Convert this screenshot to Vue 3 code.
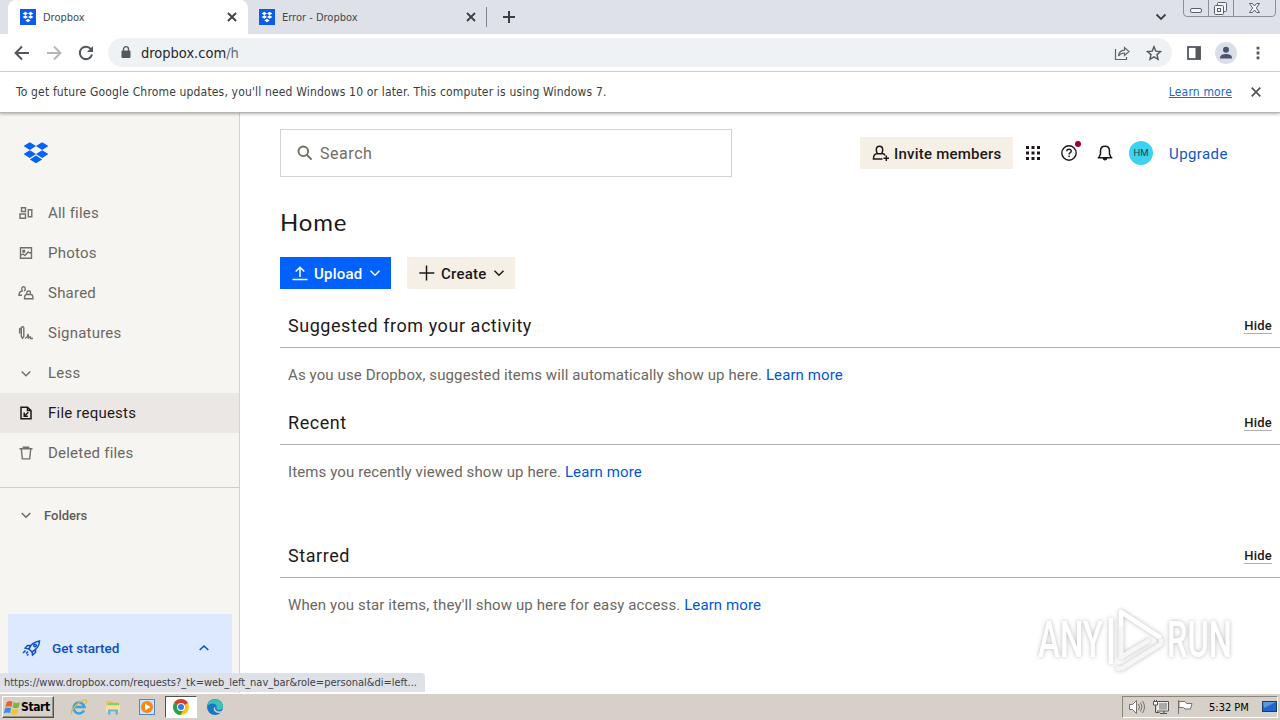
<script setup>
import { ref } from 'vue';

const tabs = [
  { title: 'Dropbox', active: true },
  { title: 'Error - Dropbox', active: false },
];

const navItems = [
  { id: 'all', label: 'All files' },
  { id: 'photos', label: 'Photos' },
  { id: 'shared', label: 'Shared' },
  { id: 'signatures', label: 'Signatures' },
  { id: 'less', label: 'Less' },
  { id: 'requests', label: 'File requests' },
  { id: 'deleted', label: 'Deleted files' },
];
const current = ref('requests');

const sections = [
  {
    id: 'suggested',
    title: 'Suggested from your activity',
    text: 'As you use Dropbox, suggested items will automatically show up here.',
  },
  {
    id: 'recent',
    title: 'Recent',
    text: 'Items you recently viewed show up here.',
  },
  {
    id: 'starred',
    title: 'Starred',
    text: "When you star items, they'll show up here for easy access.",
  },
];
</script>

<template>
  <div class="screen">
    <!-- Tabs -->
    <div class="tab-strip">
      <div v-for="tab in tabs" :key="tab.title" class="tab" :class="{ active: tab.active }">
        <svg class="favicon" width="16" height="16" viewBox="0 0 16 16">
          <rect width="16" height="16" fill="#0d5be8" />
          <path
            fill="#fff"
            d="M5.400 2.800 8 4.500 5.400 6.200 2.600 4.500zM10.600 2.800l2.800 1.700-2.800 1.700L8 4.500zM5.400 6.300 8 8 5.400 9.700 2.600 8zM10.600 6.300 13.400 8l-2.800 1.700L8 8zM8 9.800l2.700 1.700L8 13.200l-2.700-1.700z"
          />
        </svg>
        <span class="tab-title">{{ tab.title }}</span>
        <svg class="tab-close" width="10" height="10" viewBox="0 0 10 10">
          <path d="M1 1l8 8M9 1l-8 8" stroke="#3c4043" stroke-width="1.800" />
        </svg>
      </div>
      <i class="tab-divider"></i>
      <svg class="new-tab" width="14" height="14" viewBox="0 0 14 14">
        <path d="M7 1v12M1 7h12" stroke="#3c4043" stroke-width="2" />
      </svg>
      <svg class="tab-search" width="12" height="8" viewBox="0 0 12 8">
        <path d="M1.500 1.500 6 6l4.500-4.500" fill="none" stroke="#3c4043" stroke-width="1.800" />
      </svg>
      <svg class="window-buttons" width="94" height="18" viewBox="0 0 94 18">
        <path d="M.5 0v13q0 3.500 3.500 3.500h85q3.500 0 3.500-3.500V0M25.500 0v16M50.500 0v16" fill="none" stroke="#8b909b" />
        <g fill="#f4f5f8" stroke="#5a606b">
          <rect x="7.500" y="8.500" width="11" height="4" rx="1.500" />
          <rect x="34.500" y="2.500" width="9" height="9" rx="1" />
          <rect x="31.500" y="5.500" width="9" height="9" rx="1" />
          <rect x="34.500" y="8.500" width="3" height="3" />
          <path d="M66.500 3.500h3l2 2.500 2-2.500h3l-3.200 4.500 3.200 4.500h-3l-2-2.500-2 2.500h-3l3.200-4.500z" />
        </g>
      </svg>
    </div>

    <!-- Toolbar -->
    <div class="toolbar">
      <div class="nav-buttons">
        <svg width="16" height="16" viewBox="0 0 16 16">
          <path d="M15 8H2M8 1.500 1.600 8 8 14.500" fill="none" stroke="#54585d" stroke-width="2" />
        </svg>
        <svg width="16" height="16" viewBox="0 0 16 16">
          <path d="M1 8h13M8 1.500 14.400 8 8 14.500" fill="none" stroke="#b4b6b9" stroke-width="2" />
        </svg>
        <svg width="16" height="16" viewBox="0 0 16 16">
          <path d="M13.200 4.500A6.200 6.200 0 1 0 14 9.500" fill="none" stroke="#54585d" stroke-width="2" />
          <path d="M15 1v6H9z" fill="#54585d" />
        </svg>
      </div>
      <div class="omnibox">
        <svg width="10" height="13" viewBox="0 0 10 13">
          <rect x="0.500" y="4.500" width="9" height="7.500" rx="1" fill="#54585d" />
          <path d="M2.500 5V3.200a2.500 2.500 0 0 1 5 0V5" fill="none" stroke="#54585d" stroke-width="1.300" />
        </svg>
        <span class="url">dropbox.com<span class="path">/h</span></span>
        <svg class="share" width="16" height="16" viewBox="0 0 16 16">
          <path d="M1.500 4v10.500h11V12" fill="none" stroke="#5f6368" stroke-width="1.200" />
          <path d="M4.500 11q.5-5.500 6-5.800V2.500L15 6.500l-4.500 4V8Q6.500 8 4.500 11z" fill="none" stroke="#5f6368" stroke-width="1.200" />
        </svg>
        <svg class="star" width="16" height="16" viewBox="0 0 16 16">
          <path d="M8 1.700l1.800 4.400 4.800.4-3.600 3.100 1.100 4.700L8 11.800l-4.100 2.500L5 9.600 1.400 6.500l4.800-.4z" fill="none" stroke="#54585d" stroke-width="1.400" />
        </svg>
      </div>
      <svg class="side-panel" width="14" height="14" viewBox="0 0 14 14">
        <rect x="1" y="1" width="12" height="12" fill="none" stroke="#54585d" stroke-width="1.800" />
        <rect x="8.500" y="1" width="5" height="12" fill="#54585d" />
      </svg>
      <svg class="profile" width="22" height="22" viewBox="0 0 22 22">
        <circle cx="11" cy="11" r="11" fill="#dadee6" />
        <circle cx="11" cy="7.800" r="3" fill="#4a5370" />
        <path d="M5 16.500v-1.300q1-3.200 6-3.200t6 3.200v1.300z" fill="#4a5370" />
      </svg>
      <svg class="menu" width="4" height="14" viewBox="0 0 4 14">
        <path d="M.6.700h2.800v2.800H.6zM.6 5.600h2.800v2.800H.6zM.6 10.500h2.800v2.800H.6z" fill="#54585d" />
      </svg>
    </div>

    <!-- Update notice -->
    <div class="infobar">
      <span class="info-text">To get future Google Chrome updates, you'll need Windows 10 or later. This computer is using Windows 7.</span>
      <a class="info-link">Learn more</a>
      <svg width="10" height="10" viewBox="0 0 10 10">
        <path d="M.7.700l8.600 8.600M9.300.700.700 9.300" stroke="#54585d" stroke-width="1.800" />
      </svg>
    </div>

    <div class="page">
      <aside class="sidebar">
        <svg class="logo" width="26" height="22" viewBox="0 0 26 22">
          <path
            fill="#0061fe"
            d="M6.800.200 13 4.100 6.800 8 .600 4.100zM19.200.200l6.200 3.900L19.200 8 13 4.100zM6.800 8.200l6.200 3.900L6.800 16 .6 12.100zM19.200 8.200l6.200 3.900-6.200 3.900-6.200-3.900zM13 13.500l6.100 3.900-6.100 3.900-6.100-3.900z"
          />
        </svg>
        <nav>
          <a v-for="item in navItems" :key="item.id" class="nav-item" :class="{ selected: item.id === current }">
            <svg class="nav-icon" width="16" height="16" viewBox="0 0 16 16">
              <path v-if="item.id === 'all'" d="M3.500 2.700h4v3.800h-4zM2 9h5.500v4.300H2zM10.300 4.700h3.500v7h-3.500z" />
              <path v-else-if="item.id === 'photos'" d="M2.500 2.700h11v10.600h-11zM2.500 10.500 5 9l2 1.500L10.200 7l1.300 1 2-.5M5 5.500h1.500V7H5z" />
              <path v-else-if="item.id === 'shared'" d="M3.800 5V3.500q0-1.800 1.700-1.800t1.700 1.800V5l-.9 1.200M3.800 5l.5 1Q1 6.500 1 10.200h3M8.800 9V7.500Q8.800 6 10.600 6t1.800 1.500V9M6.500 13.800q0-4.300 2-4.300H13q2 0 2 4.300z" />
              <path v-else-if="item.id === 'signatures'" d="M3.300 2v9.500L4.500 13.300l1.300-1.800V3q0-1.300-1.200-1.300T3.300 3M1.600 8.500V4l1.700-1M7 13.500q2.500-1 3-4 1 0 0 4 1.500-2 2.500-1.500v1.500H15" />
              <path v-else-if="item.id === 'less'" d="M3.700 6.500 8 10.700l4.300-4.200" stroke-width="1.500" />
              <path v-else-if="item.id === 'requests'" d="M3 2.200h6.500L13 5.500v8.300H3zM9.500 2.200v3.300H13M10.300 7.300 6.700 10.800M6.200 7.600v3.700h3.700" stroke-width="1.500" />
              <path v-else d="M1.500 3.800h13M5.300 4V2.300h5.400V4M3.300 4l1 9.900h7.400l1-9.900" />
            </svg>
            <span>{{ item.label }}</span>
          </a>
        </nav>
        <div class="folders">
          <svg width="12" height="8" viewBox="0 0 12 8">
            <path d="M1.700 2 6 6.200 10.300 2" fill="none" stroke="#6b6762" stroke-width="1.500" />
          </svg>
          <span>Folders</span>
        </div>
        <div class="get-started">
          <svg width="20" height="18" viewBox="0 0 20 18" fill="none" stroke="#0e4fc4" stroke-width="1.500">
            <path d="M7 10Q9 3.500 17.500 2 17.500 8.500 10 13zM8.500 6.500H5.500L3.200 9 7 10M13.500 10.500v3L10.500 16 10 13" />
            <circle cx="13" cy="6.500" r="1.300" />
            <path d="M6 12.500 4 14.500M3.500 11.500 1 14M6.500 15 5 16.500" />
          </svg>
          <span>Get started</span>
          <svg width="12" height="8" viewBox="0 0 12 8">
            <path d="M1.700 6 6 2l4.300 4" fill="none" stroke="#0e4fc4" stroke-width="1.600" />
          </svg>
        </div>
      </aside>

      <main class="main">
        <header class="topbar">
          <div class="search">
            <svg width="16" height="16" viewBox="0 0 16 16">
              <circle cx="6.300" cy="6.300" r="4.800" fill="none" stroke="#736c64" stroke-width="1.900" />
              <path d="M9.800 9.800l4.800 4.800" stroke="#736c64" stroke-width="2" />
            </svg>
            <span>Search</span>
          </div>
          <button class="btn invite">
            <svg width="18" height="18" viewBox="0 0 18 18" fill="none" stroke="#1e1919" stroke-width="1.500">
              <path d="M10.500 15H1.500q0-5.300 3.300-5.300h6q1.700 0 2.300 1.800" />
              <path d="M5.300 9.200Q4.300 8 4.300 5.800q0-3.500 3.200-3.500t3.200 3.500q0 2.200-1 3.400M14.300 11.500v5.500M11.500 14.200h5.500" />
            </svg>
            <span>Invite members</span>
          </button>
          <svg class="apps" width="14" height="14" viewBox="0 0 14 14">
            <path d="M0 0h3v3H0zM5.500 0h3v3h-3zM11 0h3v3h-3zM0 5.500h3v3H0zM5.500 5.500h3v3h-3zM11 5.500h3v3h-3zM0 11h3v3H0zM5.500 11h3v3h-3zM11 11h3v3h-3z" fill="#1e1919" />
          </svg>
          <div class="help">
            <svg width="16" height="16" viewBox="0 0 16 16" fill="none" stroke="#1e1919" stroke-width="1.400">
              <circle cx="8" cy="8" r="7.200" />
              <path d="M5.800 6.300q0-2 2.200-2t2.200 1.900q0 1-1.200 1.700-.9.500-.9 1.600M8.100 10.500V12" />
            </svg>
            <i class="dot"></i>
          </div>
          <svg class="bell" width="16" height="16" viewBox="0 0 16 16">
            <path d="M.7 12.800h14.600M2 12.300l1.500-3.300V6q0-4.700 4.500-4.700T12.500 6v3l1.500 3.300" fill="none" stroke="#1e1919" stroke-width="1.500" />
            <path d="M5.500 13h5q-.5 2.600-2.500 2.600T5.500 13z" fill="#1e1919" />
          </svg>
          <span class="avatar">HM</span>
          <a class="upgrade">Upgrade</a>
        </header>

        <h1>Home</h1>
        <div class="actions">
          <button class="btn upload">
            <svg width="16" height="16" viewBox="0 0 16 16" fill="none" stroke="#fff" stroke-width="1.500">
              <path d="M.5 14.500h15M8 12V2.500M3.700 6.500 8 2.200l4.300 4.300" />
            </svg>
            <span>Upload</span>
            <svg width="12" height="8" viewBox="0 0 12 8">
              <path d="M1.500 1.800 6 6.200l4.500-4.400" fill="none" stroke="#fff" stroke-width="1.500" />
            </svg>
          </button>
          <button class="btn create">
            <svg width="16" height="16" viewBox="0 0 16 16">
              <path d="M7.500 .5v15M.3 8h15" stroke="#1e1919" stroke-width="1.500" />
            </svg>
            <span>Create</span>
            <svg width="12" height="8" viewBox="0 0 12 8">
              <path d="M1.500 1.800 6 6.200l4.500-4.400" fill="none" stroke="#1e1919" stroke-width="1.500" />
            </svg>
          </button>
        </div>

        <section v-for="section in sections" :key="section.id" :class="['section', section.id]">
          <div class="section-head">
            <h2>{{ section.title }}</h2>
            <a class="hide">Hide</a>
          </div>
          <p>{{ section.text }} <a>Learn more</a></p>
        </section>
      </main>

      <div class="status">https://www.dropbox.com/requests?_tk=web_left_nav_bar&amp;role=personal&amp;di=left...</div>

      <!-- Watermark -->
      <svg class="watermark" width="220" height="78" viewBox="0 0 220 78">
        <g font-family="Roboto, sans-serif" font-size="50" font-weight="500" fill="#fff">
          <text x="8" y="55" textLength="65" lengthAdjust="spacingAndGlyphs">ANY</text>
          <text x="137" y="55" textLength="65" lengthAdjust="spacingAndGlyphs">RUN</text>
        </g>
        <g fill="none" stroke="#fff" stroke-width="4.500" stroke-linejoin="round">
          <path d="M91 57V10l40 26M81 16v46" />
          <path d="M91 24v31l29-17" stroke="#f6f6f6" />
          <path d="M91 67l40-25v-6M86 66l5 1" stroke="#f6f6f6" />
        </g>
      </svg>
    </div>

    <!-- Taskbar -->
    <footer class="taskbar">
      <div class="start">
        <svg width="17" height="17" viewBox="0 0 16 16">
          <path d="M2.500 3q3-2 5.500-.3L7 7.500Q4 6 1.200 7.700z" fill="#e8622c" />
          <path d="M9 3q3 1.500 6 0l-1.200 5Q11 9.300 8 7.800z" fill="#7fb539" />
          <path d="M1 8.800q3-1.600 5.700-.2l-1 4.700Q3 12-.2 13.500z" fill="#3f8ede" />
          <path d="M7.800 9q3 1.500 5.800.2l-1.200 4.800q-2.900 1.500-5.600-.1z" fill="#f7c331" />
        </svg>
        <b>Start</b>
      </div>
      <div class="task ie">
        <svg width="18" height="18" viewBox="0 0 18 18">
          <path d="M14 12.500A5.500 5.500 0 1 1 14.500 9H5" fill="none" stroke="#3ea2dc" stroke-width="2.600" />
          <path d="M2 16Q-.5 14 6 7.500T16 2q1.500 1-.5 4" fill="none" stroke="#e3b93a" stroke-width="1.300" />
        </svg>
      </div>
      <div class="task">
        <svg width="18" height="18" viewBox="0 0 18 18">
          <path d="M2 3h6l1 1.500h6V14H2z" fill="#e8c562" />
          <path d="M4 5h11v2H4z" fill="#8ac96f" />
          <path d="M2 7.500h14V14H2z" fill="#f7e29a" />
          <path d="M4 16.500v-5h10v5h-2.500v-3h-5v3z" fill="#69b0dd" />
        </svg>
      </div>
      <div class="task">
        <svg width="18" height="18" viewBox="0 0 18 18">
          <rect x="1.500" y="1.500" width="15" height="15" fill="#cfe2f4" stroke="#5288bd" />
          <circle cx="9" cy="9" r="6" fill="#f28a1c" />
          <path d="M7 5.500 12.500 9 7 12.500z" fill="#fff" />
        </svg>
      </div>
      <div class="task pressed">
        <svg width="16" height="16" viewBox="0 0 16 16">
          <circle cx="8" cy="8" r="8" fill="#f9c41d" />
          <path d="M8 8 1.100 4A8 8 0 0 1 14.900 4z" fill="#db3a2e" />
          <path d="M8 8 1.100 4A8 8 0 0 0 7.500 16L11 10z" fill="#2da04c" />
          <circle cx="8" cy="8" r="4" fill="#fff" />
          <circle cx="8" cy="8" r="3" fill="#3a78e7" />
        </svg>
      </div>
      <div class="task edge">
        <svg width="18" height="18" viewBox="0 0 18 18">
          <circle cx="9" cy="9" r="8" fill="#1478c8" />
          <path d="M1.200 8A8 8 0 0 1 17 8q0 4-4.500 4-2.500-.2-2-1.500Q11.500 6 7 5.500 3 5.300 1.200 8z" fill="#3bc4b0" />
          <path d="M9.500 8.500Q8 11 10.500 12.800q2.500 1.300 6-.3-1 2-2.500 2.500-4 .5-6-2.500-1-2.500 1.500-4z" fill="#d6d0c8" />
        </svg>
      </div>
      <div class="tray">
        <svg width="18" height="16" viewBox="0 0 18 16" stroke="#77736b" fill="none">
          <path d="M1.500 5.500h3l4-4v13l-4-4h-3z" fill="#fff" />
          <path d="M10.500 5q2 3 0 6M12.500 3.500q3 4.500 0 9M14.500 2q4 6 0 12" />
        </svg>
        <svg width="18" height="16" viewBox="0 0 18 16" stroke="#55524c">
          <rect x="6" y="3" width="10" height="8.500" fill="#a9a9a7" stroke="#fff" stroke-width="1.500" />
          <path d="M5.500 2.500h11v9.500H5M3.500 5.500v8h4M8 14.500h7M12 12v2.500" fill="none" />
          <path d="M1.500 2.500h4v3.500h-4zM2.500 1v1.500M4.500 1v1.500" fill="#fff" />
        </svg>
        <svg width="18" height="16" viewBox="0 0 18 16" stroke="#77736b" fill="#fff">
          <path d="M2.500 1v14M3 2.500h6l1.500 2H16L14.500 10H9L7.500 8.500H3z" />
        </svg>
        <span class="clock">5:32 PM</span>
        <svg width="15" height="14" viewBox="0 0 15 14">
          <rect x=".5" y="1.500" width="14" height="10" fill="#2465c5" stroke="#1c3c70" />
          <path d="M1 2h13L2 8z" fill="#5a95e6" />
          <path d="M1 12.500h13" stroke="#c8d4e2" />
        </svg>
      </div>
    </footer>
  </div>
</template>

<style>
body {
  margin: 0;
  overflow: hidden;
}
</style>

<style scoped>
.screen {
  background: #fff;
  color: #1e1919;
  display: flex;
  flex-direction: column;
  font-family: Roboto, 'Liberation Sans', sans-serif;
  height: 720px;
  overflow: hidden;
  width: 1280px;
}

svg {
  display: block;
  flex: none;
}

/* Browser chrome */
.tab-strip,
.toolbar,
.infobar,
.status,
.taskbar {
  font-family: 'DejaVu Sans Condensed', 'DejaVu Sans', sans-serif;
  font-stretch: condensed;
}

.tab-strip {
  align-items: center;
  background: #dee1e8;
  display: flex;
  flex: none;
  height: 34px;
  padding-left: 8px;
}

.tab {
  align-items: center;
  box-sizing: border-box;
  color: #45494d;
  display: flex;
  font-size: 11px;
  height: 34px;
  padding: 0 11px;
  width: 239px;
}

.tab.active {
  background: #fff;
  border-radius: 8px 8px 0 0;
  padding-left: 12px;
  width: 240px;
}

.tab-title {
  flex: 1;
  margin-left: 7px;
}

.tab-divider {
  background: #80868f;
  height: 20px;
  margin-left: -1px;
  width: 1px;
}

.new-tab {
  margin-left: 15px;
}

.tab-search {
  margin-left: auto;
}

.window-buttons {
  align-self: flex-start;
  margin: 0 3px 0 16px;
}

.toolbar {
  align-items: center;
  border-bottom: 1px solid #d8dadc;
  display: flex;
  flex: none;
  height: 37px;
}

.nav-buttons {
  display: flex;
  gap: 16px;
  margin: 0 14px;
}

.omnibox {
  align-items: center;
  background: #eff2f5;
  border-radius: 15px;
  box-sizing: border-box;
  display: flex;
  height: 29px;
  padding: 0 10px 0 13px;
  width: 1064px;
}

.url {
  color: #26292d;
  flex: 1;
  font-size: 14.500px;
  margin-left: 10px;
}

.path {
  color: #686c72;
}

.share {
  margin-right: 16px;
}

.side-panel {
  margin-left: 15px;
}

.profile {
  margin-left: 14px;
}

.menu {
  margin-left: 19px;
}

.infobar {
  align-items: center;
  background: #fff;
  border-bottom: 1px solid #b5b5b3;
  box-shadow: 0 1px 3px rgba(0, 0, 0, 0.3);
  display: flex;
  flex: none;
  font-size: 12px;
  height: 40px;
  letter-spacing: 0.165px;
  padding: 0 19px 0 16px;
  position: relative;
  z-index: 1;
}

.info-text {
  color: #3a3d41;
  flex: 1;
}

.info-link {
  color: #2568bd;
  margin-right: 19px;
  text-decoration: underline;
}

/* Page */
.page {
  display: flex;
  flex: 1;
  min-height: 0;
  position: relative;
}

.sidebar {
  background: #f7f5f2;
  border-right: 1px solid #d5d2ce;
  box-sizing: border-box;
  display: flex;
  flex-direction: column;
  width: 240px;
}

.logo {
  margin: 29px 0 29px 23px;
}

.nav-item {
  align-items: center;
  color: #6b6762;
  display: flex;
  font-size: 15px;
  gap: 14px;
  height: 40px;
  letter-spacing: 0.220px;
  padding-left: 18px;
}

.nav-icon {
  fill: none;
  stroke: #736f69;
  stroke-width: 1.400;
}

.nav-item.selected {
  background: #ebe7e4;
  color: #1e1919;
}

.selected .nav-icon {
  stroke: #1e1919;
}

.folders {
  align-items: center;
  border-top: 1px solid #d0cdc9;
  color: #605b56;
  display: flex;
  font-size: 13px;
  font-weight: 500;
  gap: 12px;
  height: 54px;
  margin-top: 14px;
  padding-left: 20px;
}

.get-started {
  align-items: center;
  background: #dce9fe;
  box-sizing: border-box;
  color: #0e4fc4;
  display: flex;
  font-size: 13.500px;
  font-weight: 500;
  height: 70px;
  margin: auto 7px 9px 8px;
  padding: 0 22px 2px 14px;
}

.get-started span {
  flex: 1;
  margin-left: 10px;
}

.main {
  flex: 1;
  padding-left: 40px;
}

.topbar {
  align-items: center;
  display: flex;
  height: 80px;
}

.search {
  align-items: center;
  border: 1px solid #d5d3d0;
  box-sizing: border-box;
  color: #736c64;
  display: flex;
  font-size: 16px;
  gap: 7px;
  height: 48px;
  letter-spacing: 0.550px;
  padding-left: 16px;
  width: 452px;
}

.btn {
  align-items: center;
  background: #f5efe6;
  border: 0;
  box-sizing: border-box;
  color: #1e1919;
  display: flex;
  font-family: inherit;
  font-size: 15px;
  font-weight: 500;
  height: 32px;
  letter-spacing: 0.230px;
  padding: 0 10px 0 12px;
}

.btn span,
.upgrade {
  padding-top: 2px;
}

.invite {
  gap: 4px;
  margin-left: 128px;
  padding: 0 0 0 12px;
  width: 153px;
}

.apps {
  margin-left: 13px;
}

.help {
  margin-left: 21px;
  position: relative;
}

.dot {
  background: #9b0032;
  border-radius: 50%;
  height: 6px;
  position: absolute;
  right: -4px;
  top: -4px;
  width: 6px;
}

.bell {
  margin-left: 20px;
}

.avatar {
  background: #3dd3ee;
  border-radius: 50%;
  color: #15414f;
  font-size: 9.500px;
  height: 24px;
  line-height: 24px;
  margin-left: 16px;
  text-align: center;
  width: 24px;
}

.upgrade {
  color: #0d56c9;
  font-size: 15px;
  letter-spacing: 0.400px;
  margin-left: 16px;
}

h1 {
  font-family: Lato, Roboto, sans-serif;
  font-size: 24px;
  font-weight: 400;
  height: 60px;
  letter-spacing: 0.800px;
  line-height: 58px;
  margin: 0;
}

.actions {
  display: flex;
  gap: 16px;
  margin: 4px 0 15px;
}

.upload {
  background: #0061fe;
  color: #fff;
  width: 111px;
}

.create {
  width: 108px;
}

.actions span {
  flex: 1;
  margin-left: 6px;
  text-align: left;
}

.section-head {
  align-items: center;
  border-bottom: 1px solid #b1afad;
  box-sizing: border-box;
  display: flex;
  height: 44px;
  justify-content: space-between;
  padding: 0 8px;
}

h2 {
  font-size: 18px;
  font-weight: 400;
  letter-spacing: 0.550px;
  margin: 0;
}

.hide {
  border-bottom: 1px solid #b1afad;
  font-size: 13px;
  font-weight: 500;
  letter-spacing: 0.250px;
  line-height: 14px;
  padding-top: 2px;
}

.section p {
  color: #6b6762;
  font-size: 15px;
  height: 53px;
  letter-spacing: 0.110px;
  line-height: 55px;
  margin: 0;
  padding-left: 8px;
}

.section p a {
  color: #0057d9;
}

.section.starred {
  margin-top: 36px;
}

.status {
  background: #dee1e8;
  border-radius: 0 4px 0 0;
  bottom: 1px;
  box-sizing: border-box;
  color: #3f4246;
  font-size: 11px;
  height: 19px;
  left: 0;
  letter-spacing: -0.020px;
  line-height: 20px;
  padding-left: 4px;
  position: absolute;
  white-space: nowrap;
  width: 425px;
}

.watermark {
  bottom: 13px;
  filter: drop-shadow(0 0 2px rgba(0, 0, 0, 0.280));
  overflow: visible;
  position: absolute;
  right: 30px;
}

/* Taskbar */
.taskbar {
  align-items: center;
  background: #d6d0c8;
  box-shadow: inset 0 1px #fff;
  box-sizing: border-box;
  display: flex;
  flex: none;
  height: 27px;
  padding: 1px 2px 0;
}

.start {
  align-items: center;
  border: 1px solid;
  border-color: #fff #55524c #55524c #fff;
  box-shadow: inset -1px -1px #96918a;
  box-sizing: border-box;
  color: #000;
  display: flex;
  font-size: 12px;
  height: 22px;
  margin-right: 9px;
  padding-left: 1px;
  width: 52px;
}

.start b {
  letter-spacing: -0.400px;
}

.task {
  align-items: center;
  box-sizing: border-box;
  display: flex;
  height: 22px;
  justify-content: center;
  margin-right: 2px;
  width: 32px;
}

.task.pressed {
  background: #fff;
  border: 1px solid;
  border-color: #55524c #fff #fff #55524c;
}

.tray {
  align-items: center;
  border: 1px solid;
  border-color: #8a857d #fff #fff #8a857d;
  box-sizing: border-box;
  display: flex;
  gap: 6px;
  height: 22px;
  margin-left: auto;
  padding-left: 5px;
  width: 156px;
}

.clock {
  color: #000;
  flex: 1;
  font-size: 11px;
  padding-left: 9px;
  white-space: nowrap;
}
</style>
